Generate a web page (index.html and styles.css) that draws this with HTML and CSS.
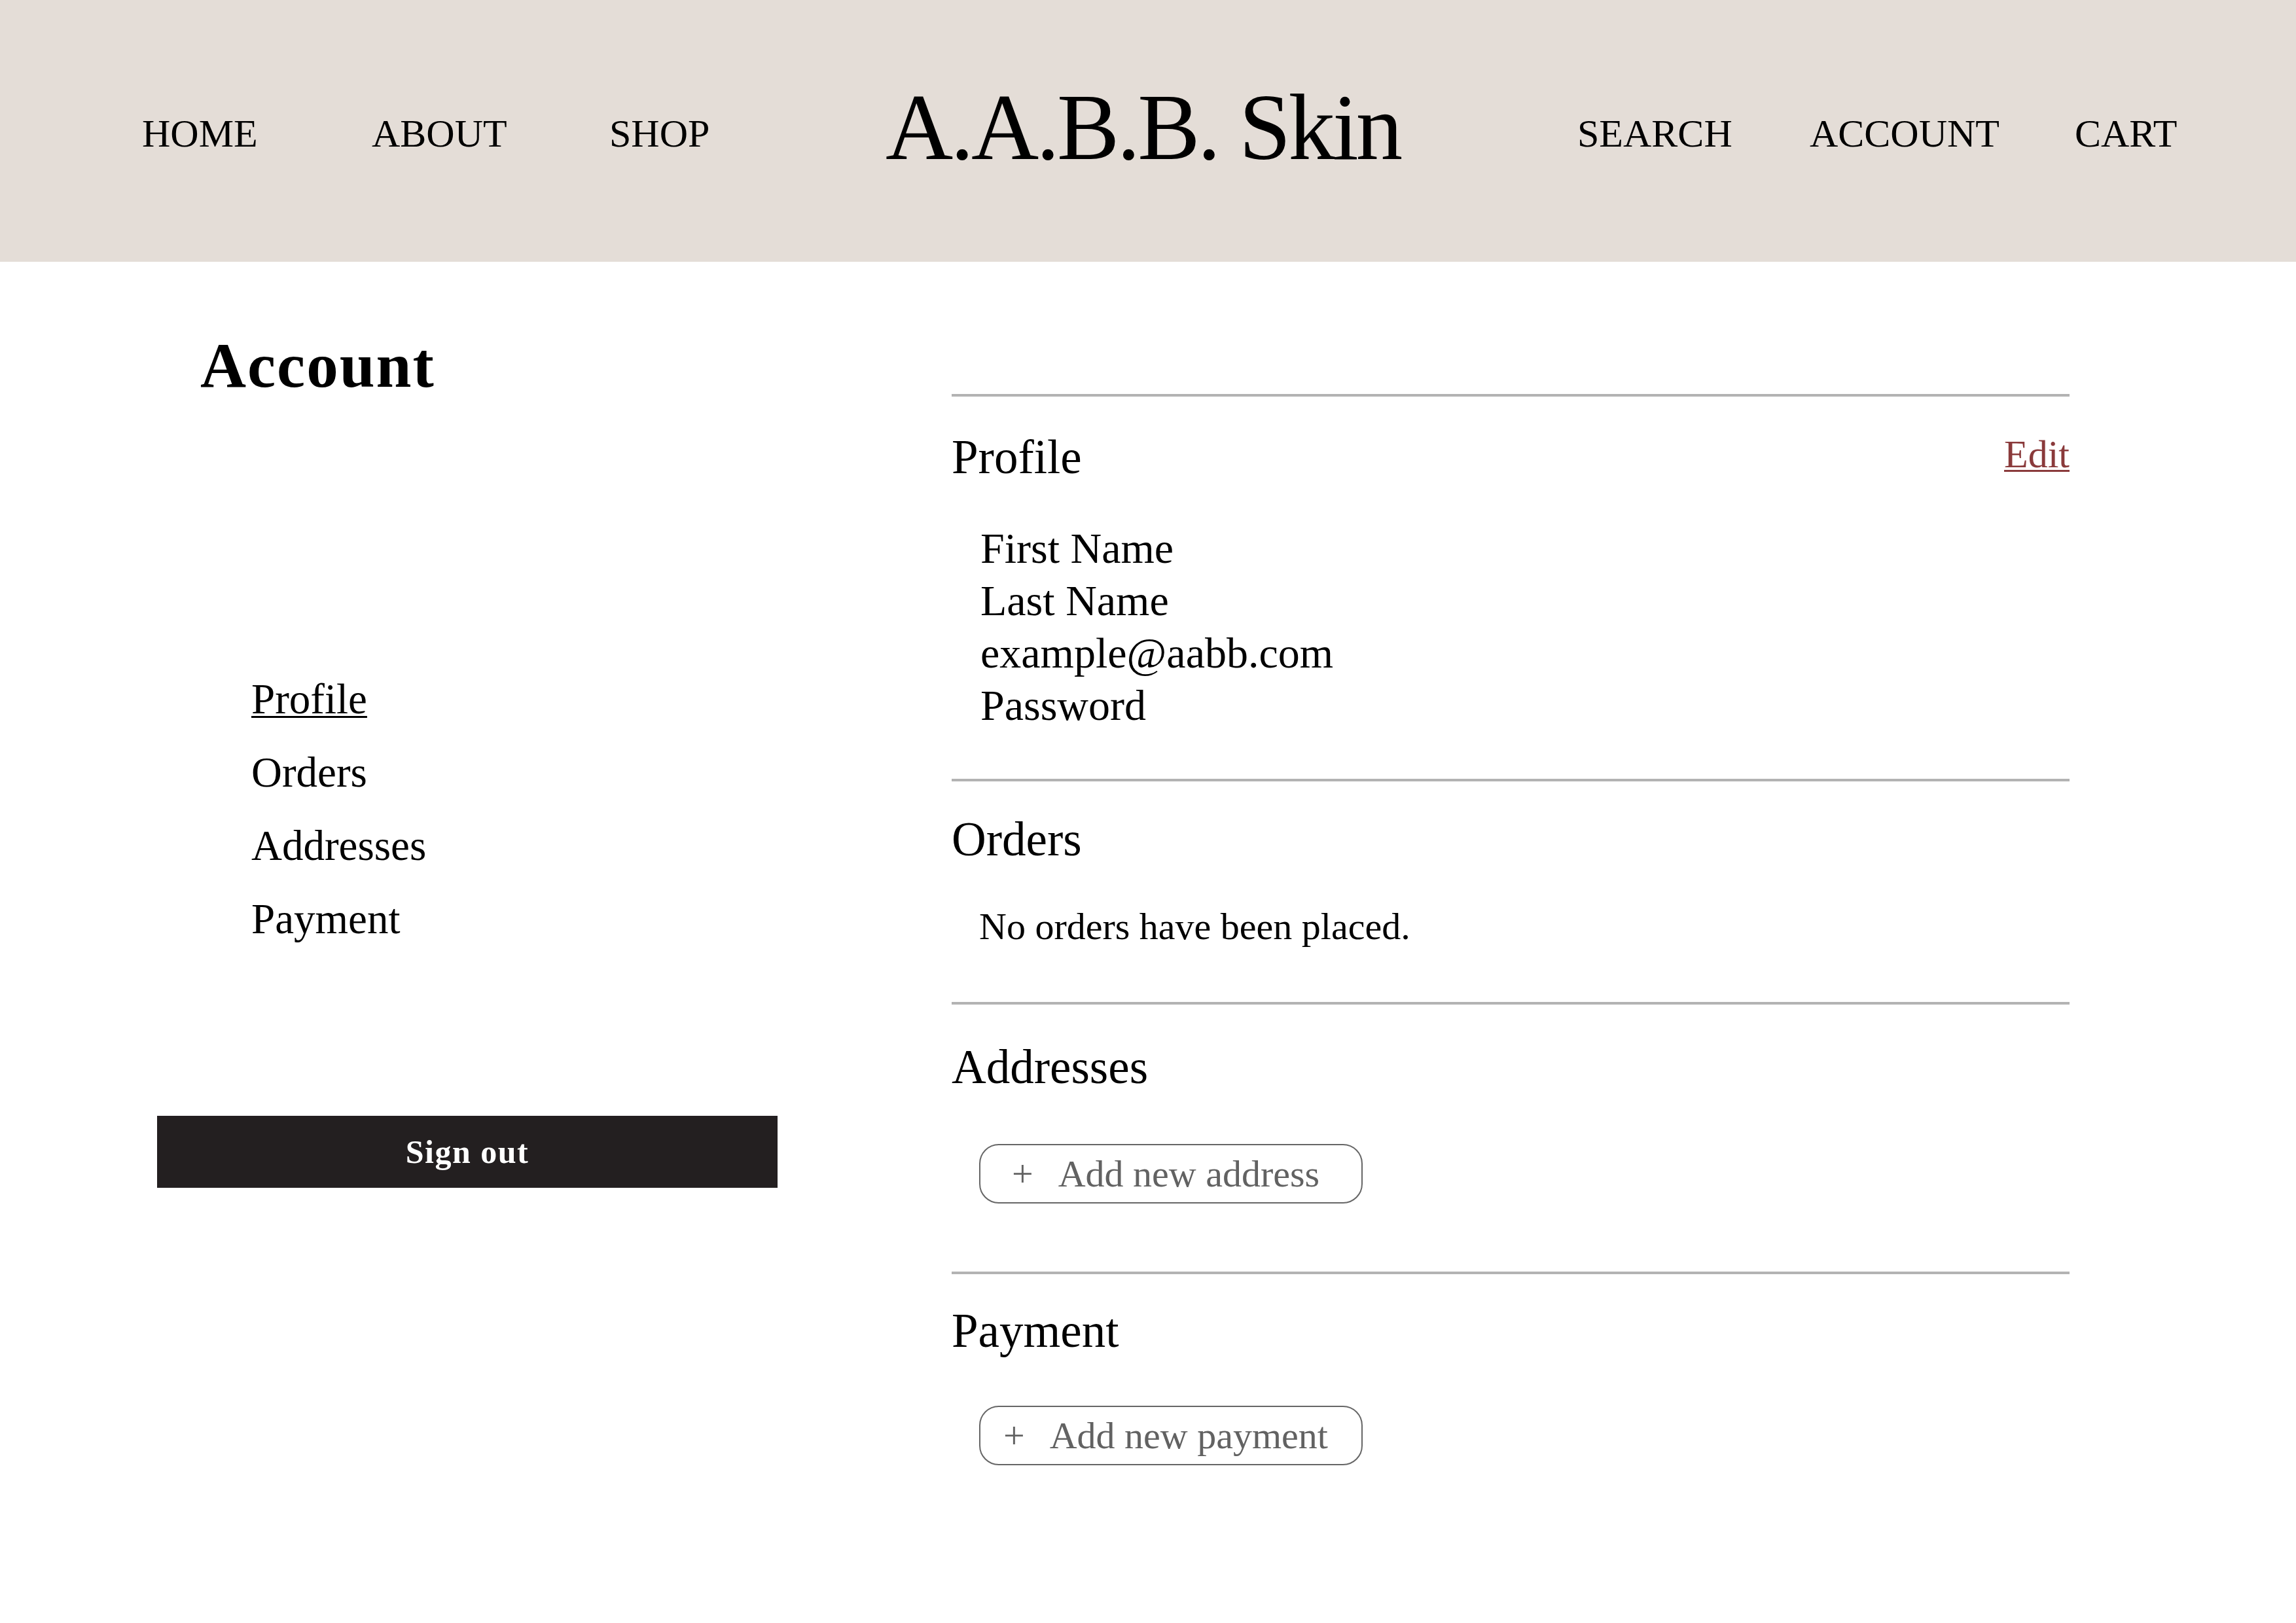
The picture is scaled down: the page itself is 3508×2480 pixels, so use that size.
FILE: index.html
```html
<!DOCTYPE html>
<html lang="en">
<head>
<meta charset="utf-8">
<title>Account – A.A.B.B. Skin</title>
<link rel="stylesheet" href="styles.css">
</head>
<body>
<header class="site-header">
  <nav class="nav nav-left">
    <a href="#">HOME</a>
    <a href="#">ABOUT</a>
    <a href="#">SHOP</a>
  </nav>
  <div class="logo">A.A.B.B. Skin</div>
  <nav class="nav nav-right">
    <a href="#">SEARCH</a>
    <a href="#">ACCOUNT</a>
    <a href="#">CART</a>
  </nav>
</header>

<main class="account">
  <aside class="sidebar">
    <h1 class="sidebar-title">Account</h1>
    <ul class="sidebar-nav">
      <li><a href="#" class="active">Profile</a></li>
      <li><a href="#">Orders</a></li>
      <li><a href="#">Addresses</a></li>
      <li><a href="#">Payment</a></li>
    </ul>
    <button class="signout" type="button">Sign out</button>
  </aside>

  <div class="panels">
    <section class="panel panel-profile">
      <div class="panel-head">
        <h2 class="panel-title">Profile</h2>
        <a href="#" class="edit">Edit</a>
      </div>
      <ul class="fields">
        <li>First Name</li>
        <li>Last Name</li>
        <li>example@aabb.com</li>
        <li>Password</li>
      </ul>
    </section>

    <section class="panel panel-orders">
      <div class="panel-head">
        <h2 class="panel-title">Orders</h2>
      </div>
      <p class="empty">No orders have been placed.</p>
    </section>

    <section class="panel panel-addresses">
      <div class="panel-head">
        <h2 class="panel-title">Addresses</h2>
      </div>
      <button class="add-btn" type="button"><span class="plus">+</span>Add new address</button>
    </section>

    <section class="panel panel-payment">
      <div class="panel-head">
        <h2 class="panel-title">Payment</h2>
      </div>
      <button class="add-btn" type="button"><span class="plus">+</span>Add new payment</button>
    </section>
  </div>
</main>
</body>
</html>
```

FILE: styles.css
```css
html, body {
  margin: 0;
  padding: 0;
  background: #ffffff;
}

body {
  font-family: "Liberation Serif", "Times New Roman", serif;
  color: #000000;
  min-height: 2480px;
}

a {
  color: inherit;
  text-decoration: none;
}

/* Header */
.site-header {
  height: 400px;
  background: #e4ddd7;
  display: grid;
  grid-template-columns: 1136px 1057px 1fr;
  align-items: center;
  padding-left: 217px;
  box-sizing: border-box;
}

.nav {
  display: grid;
  font-size: 60px;
  line-height: 1;
  margin-top: 8px;
}

.nav-left {
  grid-template-columns: 351px 363px auto;
}

.nav-right {
  grid-template-columns: 355px 405px auto;
}

.logo {
  font-size: 143px;
  line-height: 1;
  letter-spacing: -4px;
  white-space: nowrap;
  margin-bottom: 10px;
}

/* Main layout */
.account {
  display: grid;
  grid-template-columns: 948px 1708px;
  column-gap: 266px;
  padding-left: 240px;
  align-items: start;
}

/* Sidebar */
.sidebar {
  padding-top: 110px;
}

.sidebar-title {
  margin: 0 0 0 66px;
  font-size: 97px;
  line-height: 1;
  font-weight: bold;
  letter-spacing: 2px;
}

.sidebar-nav {
  list-style: none;
  margin: 405px 0 0 144px;
  padding: 0;
  font-size: 65px;
  line-height: 112px;
}

.sidebar-nav .active {
  text-decoration: underline;
  text-decoration-thickness: 3px;
  text-underline-offset: 4px;
}

.signout {
  display: block;
  width: 948px;
  height: 110px;
  margin-top: 245px;
  border: none;
  background: #231f20;
  color: #ffffff;
  font-family: inherit;
  font-size: 50px;
  font-weight: bold;
  letter-spacing: 1.5px;
  padding: 0;
}

/* Panels */
.panels {
  padding-top: 202px;
}

.panel {
  border-top: 4px solid #b3b3b3;
  padding-top: 52px;
}

.panel-profile {
  padding-top: 56px;
}

.panel-addresses {
  padding-top: 59px;
}

.panel-payment {
  padding-top: 50px;
}

.panel-head {
  display: flex;
  justify-content: space-between;
  align-items: flex-start;
}

.panel-title {
  margin: 0;
  font-size: 73px;
  font-weight: normal;
  line-height: 1;
}

.edit {
  font-size: 60px;
  line-height: 1;
  margin-top: 2px;
  color: #8a3a3b;
  text-decoration: underline;
  text-decoration-thickness: 3px;
  text-underline-offset: 4px;
}

.fields {
  list-style: none;
  margin: 63px 0 72px;
  padding: 0 0 0 44px;
  font-size: 66px;
  line-height: 80px;
}

.empty {
  margin: 62px 0 80px;
  padding-left: 42px;
  font-size: 58px;
  line-height: 70px;
}

.add-btn {
  display: flex;
  align-items: center;
  justify-content: center;
  box-sizing: border-box;
  width: 586px;
  height: 91px;
  margin: 81px 0 0 42px;
  padding: 0 16px 0 0;
  border: 2px solid #666666;
  border-radius: 30px;
  background: #ffffff;
  color: #626262;
  font-family: inherit;
  font-size: 58px;
  line-height: 1;
}

.panel-addresses .add-btn {
  margin-bottom: 104px;
}

.panel-payment .add-btn {
  margin-top: 78px;
}

.plus {
  margin-right: 38px;
}
```
